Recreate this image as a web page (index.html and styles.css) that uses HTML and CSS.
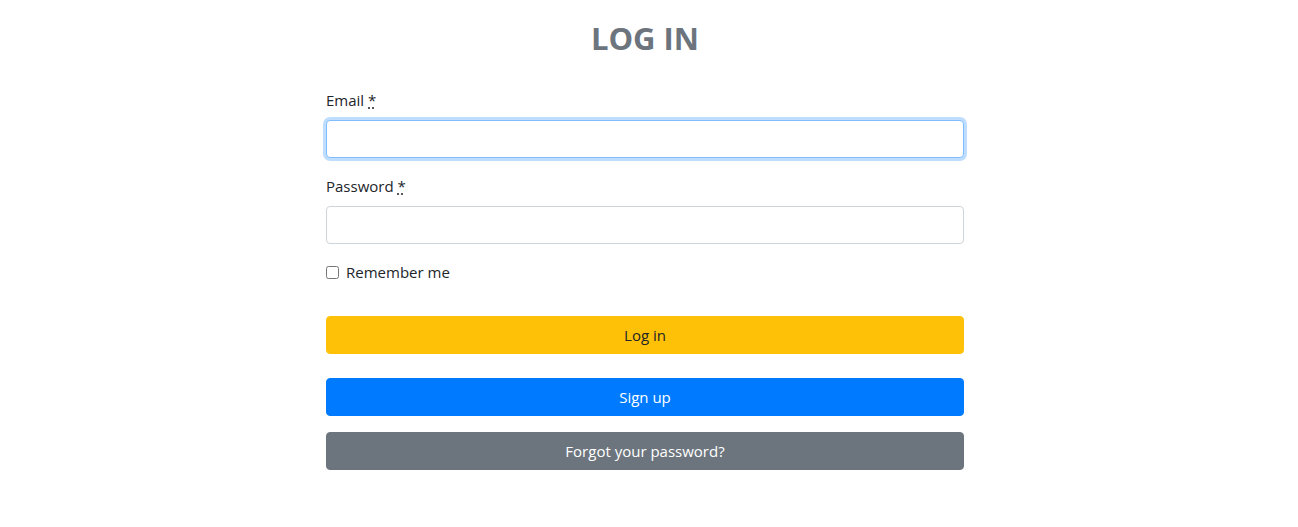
FILE: index.html
```html
<!DOCTYPE html>
<html lang="en">
<head>
<meta charset="utf-8">
<title>Log in</title>
<link rel="stylesheet" href="styles.css">
</head>
<body>
<main class="page">
  <h2 class="title">LOG IN</h2>
  <form class="form">
    <div class="group">
      <label class="label" for="email">Email <abbr title="required">*</abbr></label>
      <input class="input focus" id="email" type="email">
    </div>
    <div class="group">
      <label class="label" for="password">Password <abbr title="required">*</abbr></label>
      <input class="input" id="password" type="password">
    </div>
    <div class="check">
      <input class="checkbox" id="remember" type="checkbox">
      <label for="remember">Remember me</label>
    </div>
    <div class="actions">
      <button type="button" class="btn btn-warning">Log in</button>
      <button type="button" class="btn btn-primary">Sign up</button>
      <button type="button" class="btn btn-secondary">Forgot your password?</button>
    </div>
  </form>
</main>
</body>
</html>
```
FILE: styles.css
```css
* { box-sizing: border-box; }
body {
  margin: 0;
  background: #fff;
  font-family: "Open Sans", "Noto Sans", sans-serif;
  font-size: 15px;
  line-height: 24px;
  color: #212529;
}
.page {
  width: 638px;
  margin-left: 326px;
  display: flex;
  flex-direction: column;
}
.title {
  margin: 19px 0 31px;
  text-align: center;
  font-size: 31px;
  line-height: 38px;
  font-weight: 700;
  color: #6c757d;
}
.form { display: flex; flex-direction: column; }
.group { display: flex; flex-direction: column; margin-bottom: 16px; }
.label { margin-bottom: 8px; }
abbr {
  text-decoration: underline dotted;
  text-underline-offset: 2px;
  cursor: help;
}
.input {
  height: 38px;
  width: 100%;
  border: 1px solid #ced4da;
  border-radius: 4px;
  padding: 6px 12px;
  font: inherit;
  background: #fff;
}
.input.focus {
  border-color: #80bdff;
  box-shadow: 0 0 0 3px rgba(0, 123, 255, 0.25);
  outline: none;
}
.check {
  display: flex;
  align-items: center;
  gap: 7px;
  height: 24px;
}
.checkbox {
  margin: 0;
  width: 13px;
  height: 13px;
}
.actions {
  display: flex;
  flex-direction: column;
  margin-top: 32px;
}
.btn {
  height: 38px;
  width: 100%;
  border: 1px solid transparent;
  border-radius: 4px;
  font: inherit;
  cursor: pointer;
}
.btn-warning { background: #ffc107; border-color: #ffc107; color: #212529; }
.btn-primary { background: #007bff; border-color: #007bff; color: #fff; margin-top: 24px; }
.btn-secondary { background: #6c757d; border-color: #6c757d; color: #fff; margin-top: 16px; }
```
